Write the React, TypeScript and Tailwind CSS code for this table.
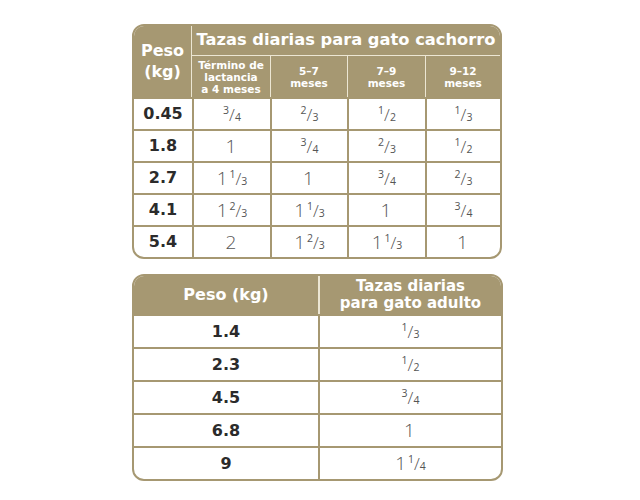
import React from 'react';

const GOLD = 'border-[#a69872]';
const LIGHT = 'border-[#ece6d3]';

type FracProps = { whole?: string; n?: string; d?: string };

// fraction like ¹/₃: small raised numerator, tall slash, small lowered denominator
const Frac: React.FC<FracProps> = ({ whole, n, d }) => (
  <span className="inline-flex items-center text-[#555] font-['Open_Sans',sans-serif] font-light">
    {whole && <span className="text-[19px] leading-none mr-[2px]">{whole}</span>}
    {n && d && (
      <span className="inline-flex items-center leading-none font-normal">
        <span className="text-[10.5px] -translate-y-[4px]">{n}</span>
        <span className="text-[17px] font-light">/</span>
        <span className="text-[10.5px] translate-y-[3px]">{d}</span>
      </span>
    )}
  </span>
);

const puppyRows: { kg: string; cells: FracProps[] }[] = [
  { kg: '0.45', cells: [{ n: '3', d: '4' }, { n: '2', d: '3' }, { n: '1', d: '2' }, { n: '1', d: '3' }] },
  { kg: '1.8', cells: [{ whole: '1' }, { n: '3', d: '4' }, { n: '2', d: '3' }, { n: '1', d: '2' }] },
  { kg: '2.7', cells: [{ whole: '1', n: '1', d: '3' }, { whole: '1' }, { n: '3', d: '4' }, { n: '2', d: '3' }] },
  { kg: '4.1', cells: [{ whole: '1', n: '2', d: '3' }, { whole: '1', n: '1', d: '3' }, { whole: '1' }, { n: '3', d: '4' }] },
  { kg: '5.4', cells: [{ whole: '2' }, { whole: '1', n: '2', d: '3' }, { whole: '1', n: '1', d: '3' }, { whole: '1' }] },
];

const adultRows: { kg: string; cell: FracProps }[] = [
  { kg: '1.4', cell: { n: '1', d: '3' } },
  { kg: '2.3', cell: { n: '1', d: '2' } },
  { kg: '4.5', cell: { n: '3', d: '4' } },
  { kg: '6.8', cell: { whole: '1' } },
  { kg: '9', cell: { whole: '1', n: '1', d: '4' } },
];

const colW = ['w-[78px]', 'w-[77px]', 'w-[78px]', 'w-[75px]'];
const subHeads = [['Término de', 'lactancia', 'a 4 meses'], ['5–7', 'meses'], ['7–9', 'meses'], ['9–12', 'meses']];

export default function App() {
  return (
    <div className="min-h-[500px] w-[640px] bg-white pl-[132px] pt-[24px] font-['DejaVu_Sans',sans-serif]">
      {/* Puppy table */}
      <div className={`w-[370px] rounded-[12px] border-2 ${GOLD} overflow-hidden`}>
        <div className="flex bg-[#a69872] text-white font-bold">
          <div className="w-[58px] h-[71px] flex flex-col items-center justify-center text-[16px] leading-[21px] pb-[2px]">
            <span>Peso</span>
            <span>(kg)</span>
          </div>
          <div className={`flex-1 border-l ${LIGHT}`}>
            <div className="h-[29px] flex items-center justify-center text-[16.3px] whitespace-nowrap">
              Tazas diarias para gato cachorro
            </div>
            <div className={`flex h-[42px] border-t ${LIGHT}`}>
              {subHeads.map((lines, i) => (
                <div
                  key={i}
                  className={`${colW[i]} ${i > 0 ? `border-l ${LIGHT}` : ''} flex flex-col items-center justify-center text-[10.5px] leading-[12px] whitespace-nowrap`}
                >
                  {lines.map((l) => (
                    <span key={l}>{l}</span>
                  ))}
                </div>
              ))}
            </div>
          </div>
        </div>
        {puppyRows.map((r) => (
          <div key={r.kg} className={`flex h-[32px] border-t-2 ${GOLD}`}>
            <div className="w-[58px] flex items-center justify-center text-[16px] font-bold text-[#2b2b2b]">{r.kg}</div>
            {r.cells.map((c, i) => (
              <div key={i} className={`${colW[i]} border-l-2 ${GOLD} flex items-center justify-center`}>
                <Frac {...c} />
              </div>
            ))}
          </div>
        ))}
      </div>

      {/* Adult table */}
      <div className={`mt-[15px] w-[371px] rounded-[12px] border-2 ${GOLD} overflow-hidden`}>
        <div className="flex h-[38px] bg-[#a69872] text-white font-bold">
          <div className="w-[184px] flex items-center justify-center text-[16px]">Peso (kg)</div>
          <div className={`flex-1 border-l-2 ${LIGHT} flex flex-col items-center justify-center text-[15px] leading-[17px] whitespace-nowrap`}>
            <span>Tazas diarias</span>
            <span>para gato adulto</span>
          </div>
        </div>
        {adultRows.map((r) => (
          <div key={r.kg} className={`flex h-[33px] border-t-2 ${GOLD}`}>
            <div className="w-[184px] flex items-center justify-center text-[16px] font-bold text-[#2b2b2b]">{r.kg}</div>
            <div className={`flex-1 border-l-2 ${GOLD} flex items-center justify-center`}>
              <Frac {...r.cell} />
            </div>
          </div>
        ))}
      </div>
    </div>
  );
}
